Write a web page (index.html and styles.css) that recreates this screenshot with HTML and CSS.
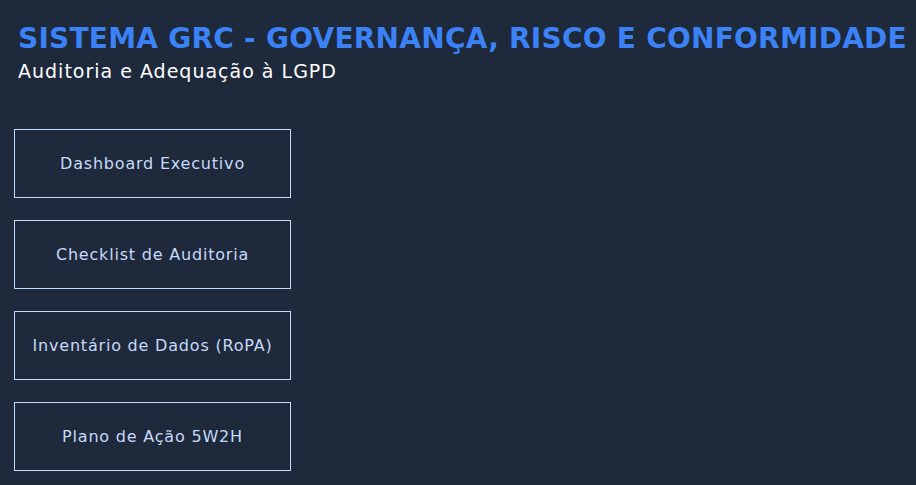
FILE: index.html
```html
<!DOCTYPE html>
<html lang="pt-BR">
<head>
<meta charset="utf-8">
<title>Sistema GRC</title>
<link rel="stylesheet" href="styles.css">
</head>
<body>
<div class="page">
  <header class="header">
    <h1 class="title">SISTEMA GRC - GOVERNANÇA, RISCO E CONFORMIDADE</h1>
    <p class="subtitle">Auditoria e Adequação à LGPD</p>
  </header>
  <nav class="menu">
    <a class="menu-btn">Dashboard Executivo</a>
    <a class="menu-btn">Checklist de Auditoria</a>
    <a class="menu-btn">Inventário de Dados (RoPA)</a>
    <a class="menu-btn">Plano de Ação 5W2H</a>
  </nav>
</div>
</body>
</html>
```
FILE: styles.css
```css
html, body {
  margin: 0;
  padding: 0;
  background: #1e293b;
  height: 100%;
}
body {
  font-family: "DejaVu Sans", "Noto Sans", sans-serif;
}
.page {
  padding: 19px 14px 0 14px;
}
.header {
  padding-left: 4px;
}
.title {
  margin: 0;
  font-size: 28px;
  line-height: 40px;
  font-weight: 700;
  letter-spacing: 0.25px;
  color: #3b82f6;
  white-space: nowrap;
}
.subtitle {
  margin: 0;
  font-size: 19px;
  line-height: 25px;
  letter-spacing: 1px;
  color: #ffffff;
}
.menu {
  margin-top: 45px;
  display: flex;
  flex-direction: column;
  gap: 22px;
  width: 277px;
}
.menu-btn {
  box-sizing: border-box;
  height: 69px;
  border: 1px solid #bfdbfe;
  display: flex;
  align-items: center;
  justify-content: center;
  color: #c7dafa;
  font-size: 16px;
  letter-spacing: 0.8px;
}
```
